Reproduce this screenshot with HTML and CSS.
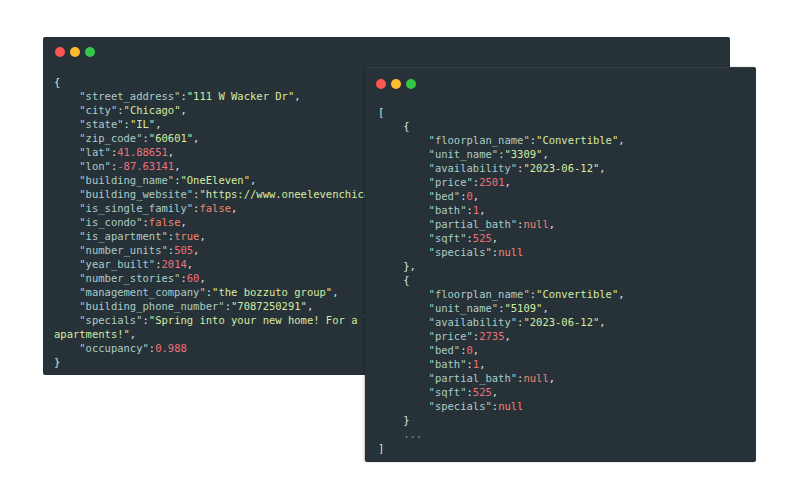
FILE: index.html
```html
<!DOCTYPE html>
<html>
<head>
<meta charset="utf-8">
<link rel="stylesheet" href="styles.css">
</head>
<body>
<div class="desk">
  <div class="win win-left">
    <div class="dots"><span class="dot red"></span><span class="dot yellow"></span><span class="dot green"></span></div>
<pre class="code"><span class="p">{</span>
    <span class="k">"street_address"</span><span class="p">:</span><span class="s">"111 W Wacker Dr"</span><span class="p">,</span>
    <span class="k">"city"</span><span class="p">:</span><span class="s">"Chicago"</span><span class="p">,</span>
    <span class="k">"state"</span><span class="p">:</span><span class="s">"IL"</span><span class="p">,</span>
    <span class="k">"zip_code"</span><span class="p">:</span><span class="s">"60601"</span><span class="p">,</span>
    <span class="k">"lat"</span><span class="p">:</span><span class="n">41.88651</span><span class="p">,</span>
    <span class="k">"lon"</span><span class="p">:</span><span class="n">-87.63141</span><span class="p">,</span>
    <span class="k">"building_name"</span><span class="p">:</span><span class="s">"OneEleven"</span><span class="p">,</span>
    <span class="k">"building_website"</span><span class="p">:</span><span class="s">"https://www.oneelevenchicago.com/"</span><span class="p">,</span>
    <span class="k">"is_single_family"</span><span class="p">:</span><span class="b">false</span><span class="p">,</span>
    <span class="k">"is_condo"</span><span class="p">:</span><span class="b">false</span><span class="p">,</span>
    <span class="k">"is_apartment"</span><span class="p">:</span><span class="b">true</span><span class="p">,</span>
    <span class="k">"number_units"</span><span class="p">:</span><span class="n">505</span><span class="p">,</span>
    <span class="k">"year_built"</span><span class="p">:</span><span class="n">2014</span><span class="p">,</span>
    <span class="k">"number_stories"</span><span class="p">:</span><span class="n">60</span><span class="p">,</span>
    <span class="k">"management_company"</span><span class="p">:</span><span class="s">"the bozzuto group"</span><span class="p">,</span>
    <span class="k">"building_phone_number"</span><span class="p">:</span><span class="s">"7087250291"</span><span class="p">,</span>
    <span class="k">"specials"</span><span class="p">:</span><span class="s">"Spring into your new home! For a limited time, enjoy up to 6 weeks free on select</span>
<span class="s">apartments!"</span><span class="p">,</span>
    <span class="k">"occupancy"</span><span class="p">:</span><span class="n">0.988</span>
<span class="p">}</span></pre>
  </div>
  <div class="win win-right">
    <div class="dots"><span class="dot red"></span><span class="dot yellow"></span><span class="dot green"></span></div>
<pre class="code"><span class="p">[</span>
    <span class="p">{</span>
        <span class="k">"floorplan_name"</span><span class="p">:</span><span class="s">"Convertible"</span><span class="p">,</span>
        <span class="k">"unit_name"</span><span class="p">:</span><span class="s">"3309"</span><span class="p">,</span>
        <span class="k">"availability"</span><span class="p">:</span><span class="s">"2023-06-12"</span><span class="p">,</span>
        <span class="k">"price"</span><span class="p">:</span><span class="n">2501</span><span class="p">,</span>
        <span class="k">"bed"</span><span class="p">:</span><span class="n">0</span><span class="p">,</span>
        <span class="k">"bath"</span><span class="p">:</span><span class="n">1</span><span class="p">,</span>
        <span class="k">"partial_bath"</span><span class="p">:</span><span class="b">null</span><span class="p">,</span>
        <span class="k">"sqft"</span><span class="p">:</span><span class="n">525</span><span class="p">,</span>
        <span class="k">"specials"</span><span class="p">:</span><span class="b">null</span>
    <span class="p">},</span>
    <span class="p">{</span>
        <span class="k">"floorplan_name"</span><span class="p">:</span><span class="s">"Convertible"</span><span class="p">,</span>
        <span class="k">"unit_name"</span><span class="p">:</span><span class="s">"5109"</span><span class="p">,</span>
        <span class="k">"availability"</span><span class="p">:</span><span class="s">"2023-06-12"</span><span class="p">,</span>
        <span class="k">"price"</span><span class="p">:</span><span class="n">2735</span><span class="p">,</span>
        <span class="k">"bed"</span><span class="p">:</span><span class="n">0</span><span class="p">,</span>
        <span class="k">"bath"</span><span class="p">:</span><span class="n">1</span><span class="p">,</span>
        <span class="k">"partial_bath"</span><span class="p">:</span><span class="b">null</span><span class="p">,</span>
        <span class="k">"sqft"</span><span class="p">:</span><span class="n">525</span><span class="p">,</span>
        <span class="k">"specials"</span><span class="p">:</span><span class="b">null</span>
    <span class="p">}</span>
    <span class="dim">...</span>
<span class="p">]</span></pre>
  </div>
</div>
</body>
</html>
```

FILE: styles.css
```css
html, body {
  margin: 0;
  padding: 0;
  background: #ffffff;
}
.desk {
  position: relative;
  width: 800px;
  height: 500px;
  overflow: hidden;
}
.win {
  position: absolute;
  background: #263238;
  border-radius: 2px;
  overflow: hidden;
  box-sizing: border-box;
}
.win-left {
  left: 43px;
  top: 37px;
  width: 687px;
  height: 338px;
  padding: 10px 11px;
}
.win-right {
  left: 365px;
  top: 67px;
  width: 391px;
  height: 395px;
  padding: 11px 11px;
  border-top: 1px solid #34424a;
  box-shadow: -1px 0 2px rgba(0,0,0,0.25);
}
.dots {
  display: flex;
  gap: 5px;
  height: 10px;
  margin-left: 1px;
}
.win-right .dots {
  margin-left: 0;
}
.dot {
  width: 10px;
  height: 10px;
  border-radius: 50%;
}
.red { background: #fc5753; }
.yellow { background: #fdbc2f; }
.green { background: #33c748; }
.code {
  margin: 18px 0 0 0;
  font-family: "DejaVu Sans Mono", monospace;
  font-size: 10.5px;
  line-height: 14px;
  color: #d6dedf;
  white-space: pre;
  overflow: hidden;
}
.win-left .code {
  width: 311px;
}
.win-right .code {
  margin-top: 16px;
  margin-left: 2px;
}
.k { color: #acccc6; }
.s { color: #d6eaa2; }
.n { color: #f07178; }
.b { color: #f0856c; }
.p { color: #dce3e4; }
.dim { color: #8a9aa0; }
```
